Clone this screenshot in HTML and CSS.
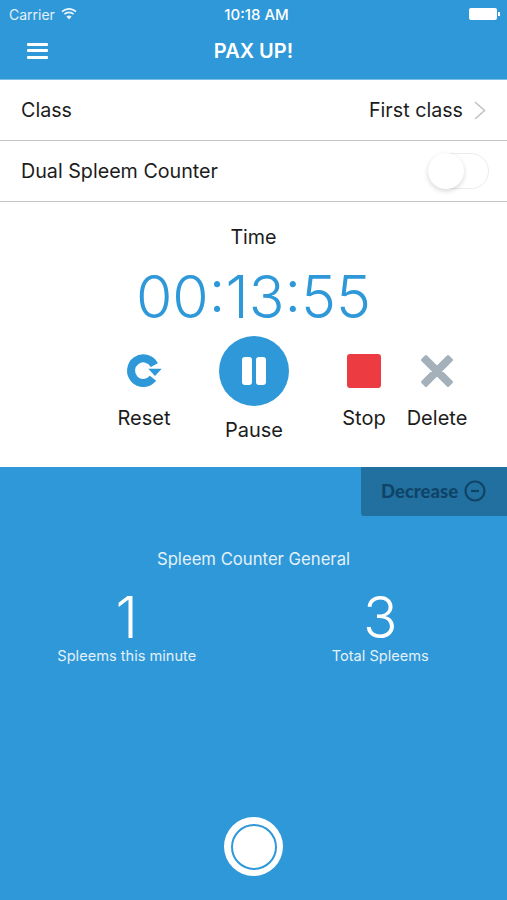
FILE: index.html
```html
<!DOCTYPE html>
<html lang="en">
  <head>
    <meta charset="UTF-8" />
    <meta name="viewport" content="width=device-width, initial-scale=1.0" />
    <title>PAX UP!</title>
    <link rel="stylesheet" href="styles.css">
  </head>
  <body>
    <header class="header">
      <div class="status-bar">
        <div class="status-left">
          <span>Carrier</span>
          <svg class="wifi" width="16" height="12" viewBox="0 0 16 12">
            <path d="M8 11.5 5.4 8.6a3.9 3.9 0 0 1 5.2 0z" fill="#e9f4fb" />
            <path d="M3.4 6.2a6.8 6.8 0 0 1 9.2 0M1 3.6a10.2 10.2 0 0 1 14 0" fill="none" stroke="#e9f4fb" stroke-width="1.7" />
          </svg>
        </div>
        <span class="status-time">10:18 AM</span>
        <div class="battery"><span class="battery-body"></span><span class="battery-tip"></span></div>
      </div>
      <div class="nav-bar">
        <div class="menu-icon"><span></span><span></span><span></span></div>
        <h1>PAX UP!</h1>
      </div>
    </header>

    <section class="settings">
      <div class="row">
        <span>Class</span>
        <div class="row-value">
          <span>First class</span>
          <svg width="12" height="19" viewBox="0 0 12 19">
            <path d="M1 1 10.5 9.5 1 18" fill="none" stroke="#c2c2c2" stroke-width="1.6" />
          </svg>
        </div>
      </div>
      <div class="row">
        <span>Dual Spleem Counter</span>
        <div class="switch"><span class="knob"></span></div>
      </div>
    </section>

    <section class="timer">
      <p class="timer-label">Time</p>
      <p class="timer-value">00:13:55</p>
      <div class="controls">
        <div class="control control-reset">
          <svg class="control-icon" width="38" height="38" viewBox="0 0 38 38">
            <path d="M29.3 13.1A12.3 12.3 0 1 0 28 26.3" fill="none" stroke="#2e98d8" stroke-width="8" />
            <path d="M23.3 16.7H36.7L30 24z" fill="#2e98d8" />
          </svg>
          <span>Reset</span>
        </div>
        <div class="control control-pause">
          <div class="pause-btn"><span></span><span></span></div>
          <span>Pause</span>
        </div>
        <div class="control control-stop">
          <div class="control-icon"><span class="stop-icon"></span></div>
          <span>Stop</span>
        </div>
        <div class="control control-delete">
          <svg class="control-icon" width="38" height="38" viewBox="0 0 38 38">
            <path d="M8 4.5 19 15.5 30 4.5 33.5 8 22.5 19 33.5 30 30 33.5 19 22.5 8 33.5 4.5 30 15.5 19 4.5 8z" fill="#a4b1ba" stroke="#a4b1ba" stroke-width="3" stroke-linejoin="round" />
          </svg>
          <span>Delete</span>
        </div>
      </div>
    </section>

    <section class="counter-panel">
      <div class="decrease">
        <span>Decrease</span>
        <svg width="22" height="22" viewBox="0 0 22 22">
          <circle cx="11" cy="11" r="9.5" fill="none" stroke="#0f4468" stroke-width="2.2" />
          <path d="M7 11h8" stroke="#0f4468" stroke-width="2.2" />
        </svg>
      </div>
      <p class="counter-title">Spleem Counter General</p>
      <div class="counters">
        <div class="counter">
          <span class="counter-num">1</span>
          <span class="counter-label">Spleems this minute</span>
        </div>
        <div class="counter">
          <span class="counter-num">3</span>
          <span class="counter-label">Total Spleems</span>
        </div>
      </div>
      <div class="record-wrap">
        <div class="record"><span></span></div>
      </div>
    </section>
  </body>
</html>
```

FILE: styles.css
```css
* {
  box-sizing: border-box;
}

body {
  margin: 0;
  height: 900px;
  overflow: hidden;
  display: flex;
  flex-direction: column;
  background-color: #2e98d8;
  font-family: 'Inter', 'Liberation Sans', sans-serif;
  color: #1c1c1c;
}

p,
h1 {
  margin: 0;
}

.header {
  height: 80px;
  background-color: #2e98d8;
  color: #fff;
  border-bottom: 1px solid #7cc0e8;
}

.status-bar {
  height: 28px;
  padding: 0 7px 0 9px;
  display: flex;
  align-items: center;
  justify-content: space-between;
  position: relative;
  font-size: 14px;
  color: #e3f1fa;
}

.status-left {
  display: flex;
  align-items: center;
  gap: 6px;
}

.status-time {
  position: absolute;
  left: 6px;
  right: 0;
  text-align: center;
  font-size: 15px;
  font-weight: 500;
  color: #fff;
}

.battery {
  display: flex;
  align-items: center;
  gap: 1px;
}

.battery-body {
  width: 28px;
  height: 12px;
  border-radius: 2px;
  background-color: #fff;
}

.battery-tip {
  width: 2px;
  height: 4px;
  background-color: #fff;
}

.nav-bar {
  height: 51px;
  padding: 0 0 6px 27px;
  position: relative;
  display: flex;
  align-items: center;
}

.menu-icon {
  width: 21px;
  display: flex;
  flex-direction: column;
  gap: 3.5px;
}

.menu-icon span {
  height: 3px;
  border-radius: 1px;
  background-color: #fff;
}

.nav-bar h1 {
  position: absolute;
  left: 0;
  right: 0;
  text-align: center;
  font-size: 20px;
  font-weight: 600;
}

.settings {
  background-color: #fff;
}

.row {
  height: 61px;
  padding: 0 18px 0 21px;
  display: flex;
  align-items: center;
  justify-content: space-between;
  border-bottom: 1px solid #c4c4c4;
  font-size: 19.7px;
}

.row-value {
  display: flex;
  align-items: center;
  gap: 11px;
  padding-right: 3px;
}

.switch {
  width: 61px;
  height: 36px;
  border-radius: 18px;
  border: 1px solid #ececec;
  background-color: #fff;
  position: relative;
}

.knob {
  position: absolute;
  left: -1px;
  top: -1px;
  width: 36px;
  height: 36px;
  border-radius: 50%;
  background-color: #fff;
  box-shadow: 0 2px 5px rgba(0, 0, 0, 0.16);
}

.timer {
  height: 265px;
  background-color: #fff;
  padding-top: 24px;
  text-align: center;
}

.timer-label {
  font-size: 19.7px;
  line-height: 23px;
}

.timer-value {
  margin-top: 13px;
  font-size: 59px;
  line-height: 70px;
  font-weight: 300;
  color: #2e98d8;
}

.controls {
  display: flex;
  padding-left: 106px;
  margin-top: 4px;
  font-size: 20px;
}

.control {
  width: 76px;
  display: flex;
  flex-direction: column;
  align-items: center;
}

.control-icon {
  width: 38px;
  height: 38px;
  margin-top: 16px;
  margin-bottom: 17px;
  display: flex;
  align-items: center;
  justify-content: center;
}

.control-pause {
  width: 144px;
}

.control-stop {
  width: 76px;
}

.control-delete {
  width: 70px;
}

.control span {
  line-height: 23px;
}

.pause-btn {
  width: 70px;
  height: 70px;
  margin-bottom: 13px;
  border-radius: 50%;
  background-color: #2e98d8;
  display: flex;
  align-items: center;
  justify-content: center;
  gap: 4px;
}

.pause-btn span {
  width: 10px;
  height: 28px;
  border-radius: 3px;
  background-color: #fff;
}

.stop-icon {
  width: 34px;
  height: 34px;
  border-radius: 3px;
  background-color: #ec3b41;
}

.counter-panel {
  flex: 1;
  display: flex;
  flex-direction: column;
  color: #fff;
  background-color: #2e98d8;
}

.decrease {
  align-self: flex-end;
  width: 146px;
  height: 49px;
  padding: 0 0 2px 20px;
  display: flex;
  align-items: center;
  gap: 6px;
  background-color: #22709f;
  border-bottom-left-radius: 3px;
  color: #0f4468;
  font-family: 'Lato', sans-serif;
  font-size: 18.5px;
  font-weight: 900;
}

.counter-title {
  margin-top: 33px;
  text-align: center;
  font-size: 16.7px;
  line-height: 20px;
  color: #e3f1fa;
}

.counters {
  display: grid;
  grid-template-columns: 1fr 1fr;
  margin-top: 19px;
}

.counter {
  display: flex;
  flex-direction: column;
  align-items: center;
}

.counter-num {
  font-size: 57px;
  line-height: 60px;
  font-weight: 300;
}

.counter-label {
  font-size: 14.6px;
  line-height: 18px;
  margin-top: -1px;
  color: #e3f1fa;
}

.record-wrap {
  margin-top: auto;
  padding-bottom: 24px;
  display: flex;
  justify-content: center;
}

.record {
  width: 59px;
  height: 59px;
  border-radius: 50%;
  background-color: #fff;
  display: flex;
  align-items: center;
  justify-content: center;
}

.record span {
  width: 46px;
  height: 46px;
  border-radius: 50%;
  background-color: #fff;
  border: 2px solid #2e98d8;
}
```
